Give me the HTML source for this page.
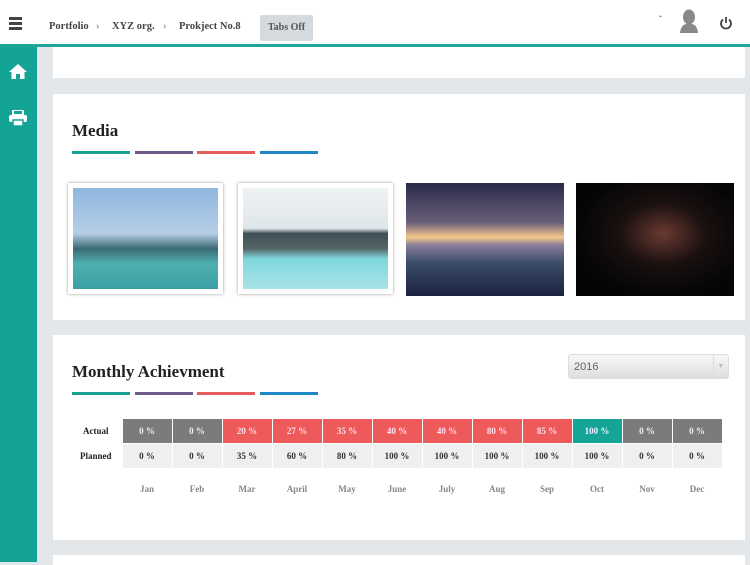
<!DOCTYPE html>
<html><head><style>
*{margin:0;padding:0;box-sizing:border-box}
body{width:750px;height:562px;overflow:hidden;background:#e4e7ea;font-family:"Liberation Serif",serif;position:relative}
.hdr{position:absolute;left:0;top:0;width:750px;height:44px;background:#fff}
.line{position:absolute;left:0;top:44px;width:750px;height:3px;background:#1fa698}
.side{position:absolute;left:0;top:47px;width:37px;height:515px;background:#14a495}
.card{position:absolute;left:53px;width:692px;background:#fff}
.bc{position:absolute;top:21px;font-size:10.5px;font-weight:bold;color:#444}
.tabs{position:absolute;left:260px;top:15px;width:53px;height:26px;background:#d5dadf;border-radius:2px;font-size:10px;font-weight:bold;color:#555;text-align:center;line-height:26px}
h2{position:absolute;left:19px;font-size:17px;font-weight:bold;color:#222}
.bars{position:absolute;left:19px;height:3px;width:248px}
.bars i{position:absolute;top:0;height:3px;width:58px}
.img{position:absolute}
table{position:absolute;left:17px;top:83px;border-collapse:collapse;font-size:9px;font-weight:bold;table-layout:fixed;width:652px}
td{width:50px;height:25px;text-align:center;border:1px solid #fff;overflow:hidden;white-space:nowrap}
td.l{width:52px;border:none;color:#222}
.g{background:#7b7b7b;color:#eee}.r{background:#ee5a5a;color:#fde}.t{background:#15a596;color:#eef}.p{background:#efefef;color:#333}
.m td{color:#888;border:none;height:38px;padding-top:3px}
</style></head><body>
<div class="hdr">
<div style="position:absolute;left:9px;top:17px;width:13px;height:2.5px;background:#444;box-shadow:0 5px 0 #444,0 10px 0 #444"></div>
<div class="bc" style="left:49px">Portfolio</div>
<div class="bc" style="left:96px;font-weight:normal;color:#666">›</div>
<div class="bc" style="left:112px">XYZ org.</div>
<div class="bc" style="left:163px;font-weight:normal;color:#666">›</div>
<div class="bc" style="left:179px">Prokject No.8</div>
<div class="tabs">Tabs Off</div>
<div style="position:absolute;left:659px;top:14px;font-size:9px;color:#555">ˇ</div>
<svg style="position:absolute;left:678px;top:9px" width="22" height="24" viewBox="0 0 22 24"><ellipse cx="11" cy="8" rx="6" ry="7.5" fill="#888"/><path d="M2 24 Q3 15 9 15 L13 15 Q19 15 20 24Z" fill="#888"/></svg>
<svg style="position:absolute;left:719px;top:16px" width="14" height="14" viewBox="0 0 14 14"><path d="M4 3.5A5 5 0 1 0 10 3.5" fill="none" stroke="#444" stroke-width="1.8"/><path d="M7 1V7" stroke="#444" stroke-width="1.8"/></svg>
</div>
<div class="line"></div>
<div class="side">
<svg style="position:absolute;left:9px;top:17px" width="18" height="15" viewBox="0 0 18 15"><path d="M9 0L0 8H2.5V15H7V10H11V15H15.5V8H18Z" fill="#fff"/></svg>
<svg style="position:absolute;left:9px;top:63px" width="18" height="16" viewBox="0 0 18 16"><rect x="4" y="0" width="10" height="5" fill="none" stroke="#fff" stroke-width="2"/><rect x="0" y="5" width="18" height="7" rx="2" fill="#fff"/><rect x="4" y="10" width="10" height="6" fill="#fff" stroke="#14a495" stroke-width="1.5"/></svg>
</div>
<div class="card" style="top:47px;height:31px"></div>
<div class="card" style="top:94px;height:226px">
<h2 style="top:27px">Media</h2>
<div class="bars" style="top:57px"><i style="left:0;background:#1aa193"></i><i style="left:63px;background:#6f5a8c"></i><i style="left:125px;background:#e45c5c"></i><i style="left:188px;background:#1e88c7"></i></div>
<div class="img" style="left:15px;top:89px;width:155px;height:111px;background:#fff;box-shadow:0 0 3px #999;padding:5px"><div style="width:100%;height:100%;background:linear-gradient(#8fb7e0 0%,#b6cde5 45%,#3a6b74 60%,#4fb0b0 75%,#3aa0a4 100%)"></div></div>
<div class="img" style="left:185px;top:89px;width:155px;height:111px;background:#fff;box-shadow:0 0 3px #999;padding:5px"><div style="width:100%;height:100%;background:linear-gradient(#eef2f4 0%,#dfe6ea 40%,#3e4e55 45%,#566 60%,#7fd6de 70%,#a9e3e6 100%)"></div></div>
<div class="img" style="left:353px;top:89px;width:158px;height:113px;background:linear-gradient(#2a2a4a 0%,#6a5f7a 35%,#f3c88a 48%,#8a7f9a 55%,#3d4d6a 70%,#1a2240 100%)"></div>
<div class="img" style="left:523px;top:89px;width:158px;height:113px;background:radial-gradient(ellipse at 55% 45%,#6a3a30 0%,#1a1010 35%,#050505 70%)"></div>
</div>
<div class="card" style="top:335px;height:205px">
<h2 style="top:27px">Monthly Achievment</h2>
<div class="bars" style="top:57px"><i style="left:0;background:#1aa193"></i><i style="left:63px;background:#6f5a8c"></i><i style="left:125px;background:#e45c5c"></i><i style="left:188px;background:#1e88c7"></i></div>
<div style="position:absolute;left:515px;top:19px;width:161px;height:25px;border:1px solid #ddd;border-radius:3px;background:linear-gradient(#f7f7f7,#dedede);font-family:'Liberation Sans',sans-serif;font-size:11px;color:#666;line-height:24px;padding-left:5px">2016<span style="position:absolute;right:0;top:0;width:15px;height:23px;border-left:1px solid #ddd;font-size:7px;color:#bbb;text-align:center">▼</span></div>
<table>
<colgroup><col style="width:52px"><col span="12" style="width:50px"></colgroup>
<tr><td class="l">Actual</td><td class="g">0 %</td><td class="g">0 %</td><td class="r">20 %</td><td class="r">27 %</td><td class="r">35 %</td><td class="r">40 %</td><td class="r">40 %</td><td class="r">80 %</td><td class="r">85 %</td><td class="t">100 %</td><td class="g">0 %</td><td class="g">0 %</td></tr>
<tr><td class="l">Planned</td><td class="p">0 %</td><td class="p">0 %</td><td class="p">35 %</td><td class="p">60 %</td><td class="p">80 %</td><td class="p">100 %</td><td class="p">100 %</td><td class="p">100 %</td><td class="p">100 %</td><td class="p">100 %</td><td class="p">0 %</td><td class="p">0 %</td></tr>
<tr class="m"><td class="l"></td><td>Jan</td><td>Feb</td><td>Mar</td><td>April</td><td>May</td><td>June</td><td>July</td><td>Aug</td><td>Sep</td><td>Oct</td><td>Nov</td><td>Dec</td></tr>
</table>
</div>
<div class="card" style="top:555px;height:10px"></div>
</body></html>
